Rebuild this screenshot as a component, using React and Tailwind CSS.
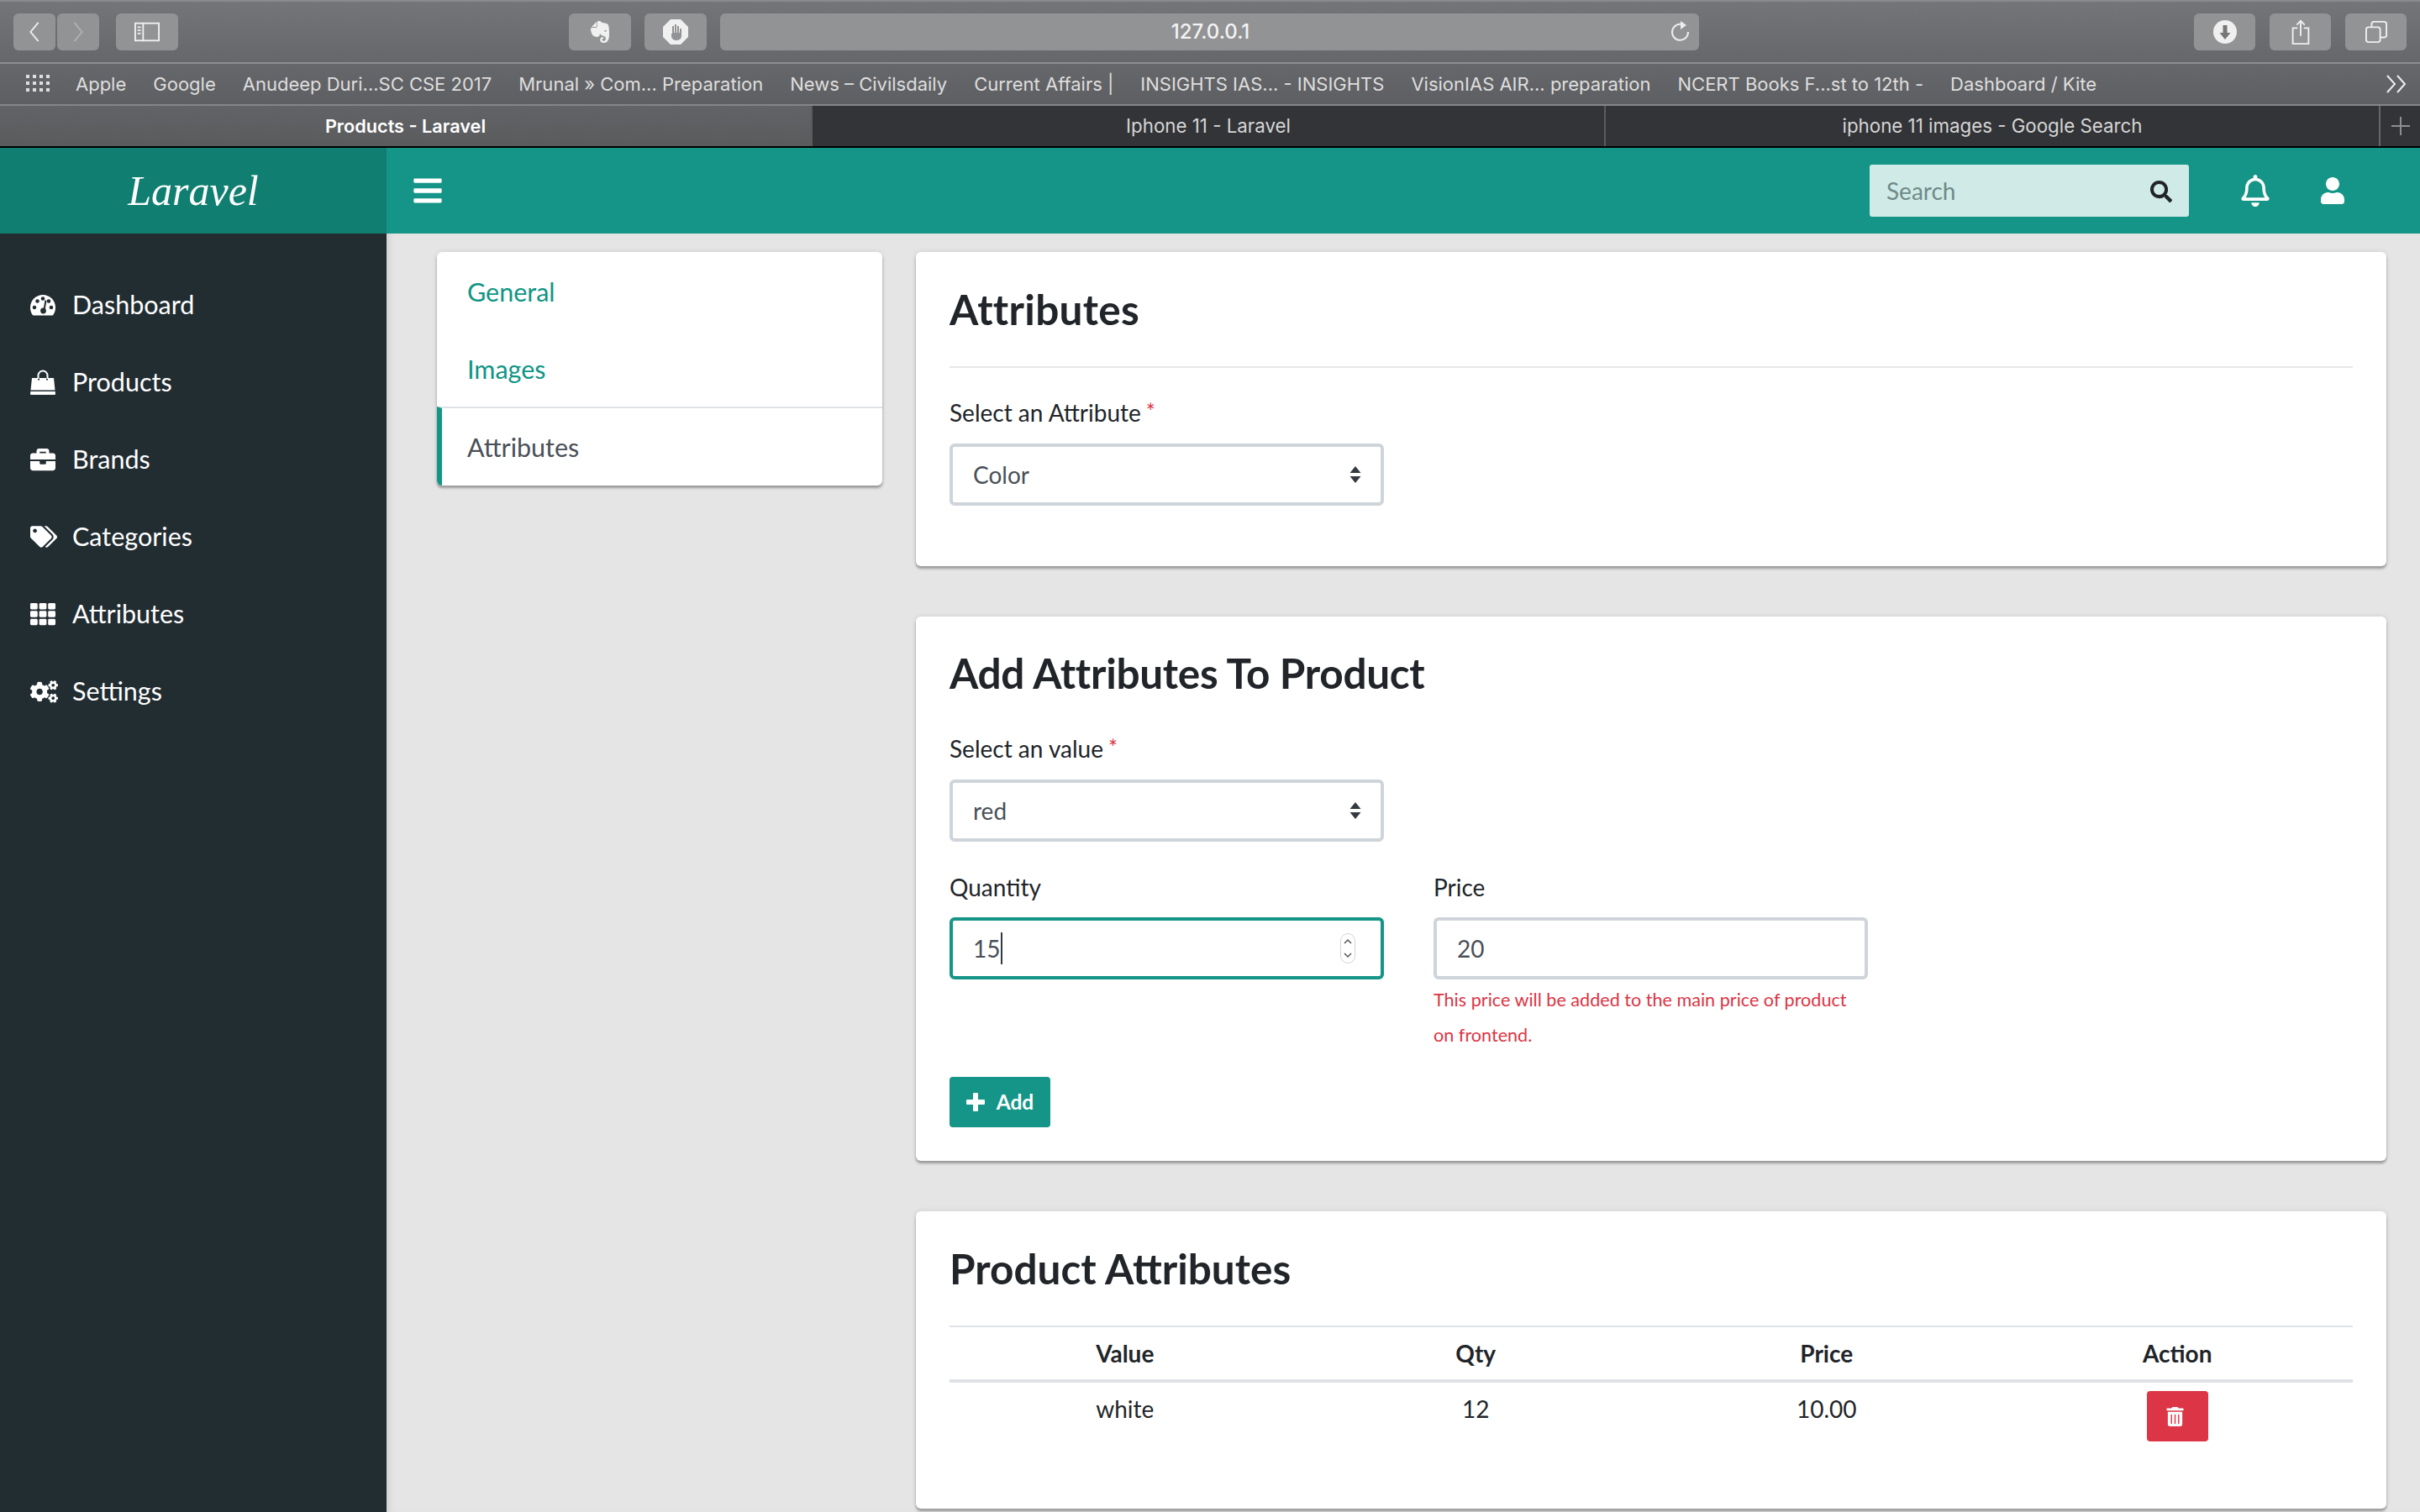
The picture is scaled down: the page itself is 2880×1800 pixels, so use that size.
import {
  FaBars,
  FaBriefcase,
  FaCogs,
  FaRegBell,
  FaSearch,
  FaTags,
  FaTh,
  FaTrashAlt,
  FaUser,
} from "react-icons/fa";
import { SiEvernote } from "react-icons/si";

const bookmarks = [
  "Apple",
  "Google",
  "Anudeep Duri...SC CSE 2017",
  "Mrunal » Com... Preparation",
  "News – Civilsdaily",
  "Current Affairs |",
  "INSIGHTS IAS... - INSIGHTS",
  "VisionIAS AIR... preparation",
  "NCERT Books F...st to 12th -",
  "Dashboard / Kite",
];

const GaugeIcon = () => (
  <svg viewBox="0 0 30 28" className="h-[28px] w-[30px]">
    <path d="M15 2C7 2 0 8.500 0 17c0 3 .8 6 2.400 8.500.4.600 1 1 1.700 1h21.800c.7 0 1.300-.4 1.700-1C29.200 23 30 20 30 17 30 8.500 23 2 15 2z" fill="white" />
    <circle cx="5" cy="17" r="2.300" fill="#222d32" />
    <circle cx="8.500" cy="9.500" r="2.300" fill="#222d32" />
    <circle cx="15" cy="6.500" r="2.300" fill="#222d32" />
    <circle cx="25" cy="17" r="2.300" fill="#222d32" />
    <circle cx="22" cy="9.500" r="2.300" fill="#222d32" />
    <path d="M18.500 8.500l-1.800 10.500" stroke="#222d32" strokeWidth="2" />
    <circle cx="15.500" cy="21" r="3.400" fill="#222d32" />
  </svg>
);

const BagIcon = () => (
  <svg viewBox="0 0 30 30" className="h-[30px] w-[30px]">
    <path d="M9.500 11V7a5.500 5.500 0 0 1 11 0v4" fill="none" stroke="white" strokeWidth="2" />
    <path d="M2 10h7v2.500h2V10h8v2.500h2V10h7l1.500 14.500H.5z" fill="white" />
    <path d="M.3 26h29.400l.3 3a1 1 0 0 1-1 1H1a1 1 0 0 1-1-1z" fill="white" />
  </svg>
);

const sidebarItems = [
  { label: "Dashboard", icon: <GaugeIcon /> },
  { label: "Products", icon: <BagIcon /> },
  { label: "Brands", icon: <FaBriefcase size={30} /> },
  { label: "Categories", icon: <FaTags size={32} /> },
  { label: "Attributes", icon: <FaTh size={30} /> },
  { label: "Settings", icon: <FaCogs size={33} /> },
];

const ToolButton = ({ className = "w-[74px]", children }) => (
  <div className={`flex h-[44px] items-center justify-center rounded-[6px] bg-[#929395] text-[#f0f0f0] ${className}`}>
    {children}
  </div>
);

const SelectArrows = () => (
  <svg viewBox="0 0 16 20" className="pointer-events-none absolute right-[26px] top-[27px] h-[20px] w-[16px]">
    <path d="M8 0l6.500 8h-13zM8 20l6.500-8h-13z" fill="#343a40" />
  </svg>
);

const SelectField = ({ value }) => (
  <div className="relative w-[517px]">
    <select
      defaultValue={value}
      className="h-[74px] w-full appearance-none rounded-[6px] border-4 border-[#ced4da] bg-white pl-[24px] text-[28px] text-[#495057] outline-none"
    >
      <option>{value}</option>
    </select>
    <SelectArrows />
  </div>
);

const FieldLabel = ({ children, required }) => (
  <div className="flex h-[36px] items-center text-[28px] leading-[36px] text-[#212529]">
    {children}
    {required && <span className="ml-[6px] mt-[-2px] text-[26px] leading-none text-[#dc3545]">*</span>}
  </div>
);

const Card = ({ className = "", children }) => (
  <div className={`rounded-[6px] bg-white px-[40px] shadow-[0_3px_3px_rgba(0,0,0,0.3),0_0_6px_rgba(0,0,0,0.1)] ${className}`}>
    {children}
  </div>
);

export default function App() {
  return (
    <div className="flex h-[1800px] w-[2880px] flex-col overflow-hidden bg-[#e5e5e5] font-['Lato',sans-serif]">
      {/* browser toolbar */}
      <div className="flex h-[76px] items-center border-y-2 border-t-[#8a8b8d] border-b-[#8d8e90] bg-gradient-to-b from-[#747579] to-[#66676a] pl-[16px] pr-[16px] font-['Inter',sans-serif]">
        <div className="flex gap-[2px]">
          <ToolButton className="w-[50px]">
            <svg viewBox="0 0 16 28" className="h-[26px] w-[16px]" fill="none" stroke="#eee" strokeWidth="2">
              <path d="M13 2L3 14l10 12" />
            </svg>
          </ToolButton>
          <ToolButton className="w-[50px]">
            <svg viewBox="0 0 16 28" className="h-[26px] w-[16px]" fill="none" stroke="#b0b1b3" strokeWidth="2">
              <path d="M3 2l10 12L3 26" />
            </svg>
          </ToolButton>
        </div>
        <ToolButton className="ml-[20px] w-[74px]">
          <svg viewBox="0 0 32 24" className="h-[24px] w-[30px]" fill="none" stroke="#f0f0f0" strokeWidth="2">
            <rect x="1" y="1" width="30" height="22" />
            <path d="M11 1v22" />
            <path d="M4 6h4M4 10h4M4 14h4" strokeWidth="2" />
          </svg>
        </ToolButton>
        <ToolButton className="ml-[465px] w-[74px]">
          <SiEvernote size={26} />
        </ToolButton>
        <ToolButton className="ml-[16px] w-[74px]">
          <svg viewBox="0 0 32 32" className="h-[32px] w-[32px]">
            <path d="M10 1h12l9 9v12l-9 9H10l-9-9V10z" fill="#f0f0f0" />
            <path d="M11 13v8c0 3 3 5 6 5s6-2 6-5v-9h-2v5h-1V9h-2v8h-1V7h-2v10h-1V9h-2v9h-1z" fill="#929395" />
          </svg>
        </ToolButton>
        <div className="relative ml-[16px] flex h-[44px] w-[1165px] items-center justify-center rounded-[6px] bg-[#929395]">
          <span className="ml-[2px] text-[24px] font-medium text-[#f3f3f3]">127.0.0.1</span>
          <svg viewBox="0 0 24 26" className="absolute right-[10px] top-[9px] h-[26px] w-[24px]" fill="none" stroke="#eee" strokeWidth="2">
            <path d="M15 4.500A9.500 9.500 0 1 0 21 13" />
            <path d="M12 0l7 5-7 5z" fill="#eee" stroke="none" />
          </svg>
        </div>
        <div className="ml-auto flex gap-[17px]">
          <ToolButton className="w-[73px]">
            <svg viewBox="0 0 28 28" className="h-[28px] w-[28px]">
              <circle cx="14" cy="14" r="14" fill="#f0f0f0" />
              <path d="M11.500 6h5v9h4L14 23l-6.500-8h4z" fill="#777" />
            </svg>
          </ToolButton>
          <ToolButton className="w-[73px]">
            <svg viewBox="0 0 24 32" className="h-[30px] w-[24px]" fill="none" stroke="#f0f0f0" strokeWidth="2">
              <path d="M8 11H2v20h20V11h-6M12 21V2M7 7l5-5 5 5" />
            </svg>
          </ToolButton>
          <ToolButton className="w-[73px]">
            <svg viewBox="0 0 28 28" className="h-[26px] w-[26px]" fill="none" stroke="#f0f0f0" strokeWidth="2">
              <rect x="1" y="8" width="18" height="19" rx="3" />
              <path d="M8 8V4a3 3 0 0 1 3-3h13a3 3 0 0 1 3 3v14a3 3 0 0 1-3 3h-5" />
            </svg>
          </ToolButton>
        </div>
      </div>

      {/* bookmarks */}
      <div className="flex h-[50px] items-center border-b-2 border-[#848587] bg-gradient-to-b from-[#66676a] to-[#5e5f62] pl-[31px] pr-[14px] font-['Inter',sans-serif] text-[22px] text-[#dedede]">
        <svg viewBox="0 0 28 22" className="h-[22px] w-[28px]" fill="#dedede">
          {[0, 1, 2, 3].map((c) =>
            [0, 1, 2].map((r) => <rect key={`${c}-${r}`} x={c * 8} y={r * 8} width="4" height="4" />)
          )}
        </svg>
        <div className="ml-[31px] flex gap-[32px] whitespace-nowrap">
          {bookmarks.map((b) => (
            <span key={b}>{b}</span>
          ))}
        </div>
        <svg viewBox="0 0 28 22" className="ml-auto h-[22px] w-[28px]" fill="none" stroke="#eee" strokeWidth="2">
          <path d="M3 1l9 10-9 10M15 1l9 10-9 10" />
        </svg>
      </div>

      {/* tabs */}
      <div className="flex h-[50px] border-b-2 border-black bg-[#333437] font-['Inter',sans-serif] text-[22.300px]">
        <div className="flex w-[965px] items-center justify-center bg-gradient-to-b from-[#626366] to-[#5a5b5d] text-[21.700px] font-semibold text-white">
          Products - Laravel
        </div>
        <div className="flex w-[946px] items-center justify-center border-x-2 border-x-[#5a5b5d] text-[#d6d6d6]">Iphone 11 - Laravel</div>
        <div className="flex w-[920px] items-center justify-center text-[#d6d6d6]">iphone 11 images - Google Search</div>
        <div className="flex w-[49px] items-center justify-center border-l-2 border-[#66676a] text-[#8d8e90]">
          <svg viewBox="0 0 24 24" className="h-[24px] w-[24px]" stroke="currentColor" strokeWidth="2">
            <path d="M12 1v22M1 12h22" />
          </svg>
        </div>
      </div>

      {/* app header */}
      <div className="flex h-[102px] bg-[#159587]">
        <div className="flex w-[460px] items-center justify-center bg-[#107e70] font-['Liberation_Serif',serif] text-[50px] italic text-white">
          Laravel
        </div>
        <div className="flex flex-1 items-center pl-[30px] pr-[88px] text-white">
          <FaBars size={38} />
          <div className="relative ml-auto flex h-[62px] w-[380px] items-center rounded-[3px] bg-[#d0ebe7] pl-[20px] text-[28px] text-[#6f8a87]">
            Search
            <FaSearch size={26} className="absolute right-[20px] top-[19px] text-[#212529]" />
          </div>
          <FaRegBell size={38} className="ml-[60px]" />
          <FaUser size={32} className="ml-[57px]" />
        </div>
      </div>

      <div className="flex flex-1">
        {/* sidebar */}
        <aside className="w-[460px] bg-[#222d32] pt-[39px] text-[30.500px] text-white">
          {sidebarItems.map((item) => (
            <div key={item.label} className="flex h-[92px] items-center pl-[36px]">
              <span className="flex w-[50px] items-center">{item.icon}</span>
              {item.label}
            </div>
          ))}
        </aside>

        <main className="flex flex-1 gap-[40px] pl-[60px] pr-[40px] pt-[22px] shadow-[inset_8px_0_8px_-6px_rgba(0,0,0,0.12)]">
          {/* product tabs */}
          <div className="h-[278px] w-[530px] overflow-hidden rounded-[6px] bg-white text-[30.500px] shadow-[0_3px_3px_rgba(0,0,0,0.3),0_0_6px_rgba(0,0,0,0.1)]">
            <div className="flex h-[92px] items-center pl-[36px] pt-[3px] text-[#0f9585]">General</div>
            <div className="flex h-[92px] items-center pl-[36px] pt-[3px] text-[#0f9585]">Images</div>
            <div className="flex h-[94px] items-center border-l-[6px] border-t-2 border-l-[#159587] border-t-[#dee2e6] pl-[30px] pt-[1px] text-[#495057]">
              Attributes
            </div>
          </div>

          <div className="flex w-[1750px] flex-col gap-[60px]">
            <Card className="h-[374px] pt-[36px]">
              <h3 className="h-[64px] text-[49.500px] font-bold leading-[64px] tracking-[0.3px] text-[#212529]">Attributes</h3>
              <div className="mt-[36px] h-[2px] bg-[#e6e7e8]" />
              <div className="mt-[35px]">
                <FieldLabel required>Select an Attribute</FieldLabel>
              </div>
              <div className="mt-[19px]">
                <SelectField value="Color" />
              </div>
            </Card>

            <Card className="h-[648px] pt-[35px]">
              <h3 className="h-[64px] text-[49.500px] font-bold leading-[64px] tracking-[-0.3px] text-[#212529]">Add Attributes To Product</h3>
              <div className="mt-[40px]">
                <FieldLabel required>Select an value</FieldLabel>
              </div>
              <div className="mt-[19px]">
                <SelectField value="red" />
              </div>
              <div className="mt-[36px] flex gap-[59px]">
                <div className="w-[517px]">
                  <FieldLabel>Quantity</FieldLabel>
                  <div className="mt-[18px] flex h-[74px] items-center rounded-[6px] border-4 border-[#159587] pl-[24px] pr-[30px] text-[28px] text-[#495057]">
                    15
                    <span className="ml-[1px] h-[38px] w-[2px] bg-[#343a40]" />
                    <span className="ml-auto flex h-[36px] w-[18px] flex-col items-center justify-center rounded-full border border-[#d5d5d5] text-[#555]">
                      <svg viewBox="0 0 12 26" className="h-[26px] w-[12px]" fill="none" stroke="currentColor" strokeWidth="1.500">
                        <path d="M2 7l4-4 4 4M2 19l4 4 4-4" />
                      </svg>
                    </span>
                  </div>
                </div>
                <div className="w-[517px]">
                  <FieldLabel>Price</FieldLabel>
                  <input
                    readOnly
                    value="20"
                    className="mt-[18px] h-[74px] w-full rounded-[6px] border-4 border-[#ced4da] pl-[24px] text-[28px] text-[#495057] outline-none"
                  />
                  <p className="mt-[3px] w-[500px] text-[21.600px] leading-[42px] text-[#dc3545]">
                    This price will be added to the main price of product on frontend.
                  </p>
                </div>
              </div>
              <button className="mt-[29px] flex h-[60px] w-[120px] items-center justify-center gap-[14px] rounded-[4px] bg-[#159587] text-[24.500px] font-bold text-white">
                <svg viewBox="0 0 22 22" className="h-[22px] w-[22px]" fill="white">
                  <path d="M8 1a1 1 0 0 1 1-1h4a1 1 0 0 1 1 1v7h7a1 1 0 0 1 1 1v4a1 1 0 0 1-1 1h-7v7a1 1 0 0 1-1 1H9a1 1 0 0 1-1-1v-7H1a1 1 0 0 1-1-1V9a1 1 0 0 1 1-1h7z" />
                </svg>
                Add
              </button>
            </Card>

            <Card className="h-[354px] pt-[36px]">
              <h3 className="h-[64px] text-[49.500px] font-bold leading-[64px] text-[#212529]">Product Attributes</h3>
              <table className="mt-[36px] w-full table-fixed text-center text-[28px] text-[#212529]">
                <thead>
                  <tr className="h-[65px] border-b-4 border-t-2 border-b-[#dee2e6] border-t-[#dee2e6]">
                    <th className="font-bold">Value</th>
                    <th className="font-bold">Qty</th>
                    <th className="font-bold">Price</th>
                    <th className="font-bold">Action</th>
                  </tr>
                </thead>
                <tbody>
                  <tr>
                    <td className="pb-[38px] pt-[10px]">white</td>
                    <td className="pb-[38px] pt-[10px]">12</td>
                    <td className="pb-[38px] pt-[10px]">10.00</td>
                    <td className="pt-[10px] align-top">
                      <button className="inline-flex h-[60px] w-[73px] items-center justify-center rounded-[4px] bg-[#dc3545] text-white">
                        <FaTrashAlt size={23} className="mr-[5px]" />
                      </button>
                    </td>
                  </tr>
                </tbody>
              </table>
            </Card>
          </div>
        </main>
      </div>
    </div>
  );
}
